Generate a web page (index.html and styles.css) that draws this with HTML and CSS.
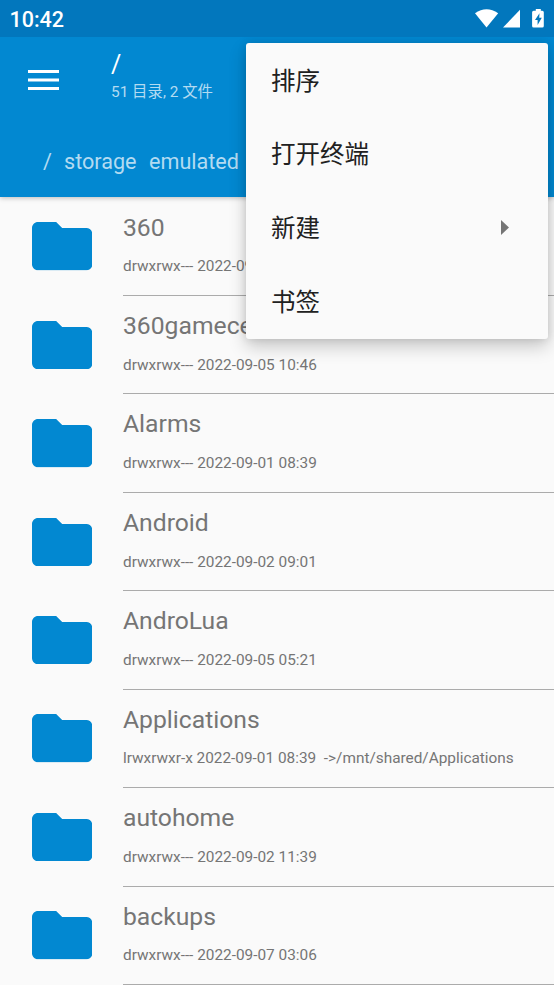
FILE: index.html
```html
<!DOCTYPE html>
<html lang="zh-CN">
<head>
<meta charset="utf-8">
<title>文件</title>
<link rel="stylesheet" href="styles.css">
</head>
<body>
<svg class="defs" aria-hidden="true"><symbol id="folder" viewBox="2 4 20 16"><path d="M10 4H4c-1.1 0-2 .9-2 2v12c0 1.1.9 2 2 2h16c1.1 0 2-.9 2-2V8c0-1.1-.9-2-2-2h-8z"/></symbol></svg>
<div class="status">
  <span class="clock">10:42</span>
  <svg class="status-icons" viewBox="0 0 70 20">
    <path d="M0 4.300Q11.500 -3.700 23.200 4.300L11.500 18.500z"/>
    <path d="M45 .7V18.500H28z"/>
    <path fill-rule="evenodd" d="M60.800 0h5v1.800h1.500q1.500 0 1.500 1.500v13.700q0 1.500-1.500 1.500h-8.700q-1.500 0-1.500-1.500V3.300q0-1.500 1.500-1.500h2.200zM64.500 4.300l-4.500 6.600h2.600v5l4.200-7.100h-2.600z"/>
  </svg>
</div>
<header class="appbar">
  <div class="toolbar">
    <svg class="burger" viewBox="0 0 31 20"><path d="M0 0h31v3H0zM0 8.500h31v3H0zM0 17h31v3H0z"/></svg>
    <div class="heading">
      <div class="title">/</div>
      <div class="subtitle">51 目录, 2 文件</div>
    </div>
  </div>
  <nav class="crumbs"><span class="root">/</span><span class="crumb">storage</span><span>emulated</span></nav>
</header>
<main class="list">
  <div class="row"><svg class="folder"><use href="#folder"/></svg><div class="info"><div class="name">360</div><div class="meta">drwxrwx--- 2022-09-05 10:46</div></div></div>
  <div class="row"><svg class="folder"><use href="#folder"/></svg><div class="info"><div class="name">360gamece</div><div class="meta">drwxrwx--- 2022-09-05 10:46</div></div></div>
  <div class="row"><svg class="folder"><use href="#folder"/></svg><div class="info"><div class="name">Alarms</div><div class="meta">drwxrwx--- 2022-09-01 08:39</div></div></div>
  <div class="row"><svg class="folder"><use href="#folder"/></svg><div class="info"><div class="name">Android</div><div class="meta">drwxrwx--- 2022-09-02 09:01</div></div></div>
  <div class="row"><svg class="folder"><use href="#folder"/></svg><div class="info"><div class="name">AndroLua</div><div class="meta">drwxrwx--- 2022-09-05 05:21</div></div></div>
  <div class="row"><svg class="folder"><use href="#folder"/></svg><div class="info"><div class="name">Applications</div><div class="meta">lrwxrwxr-x 2022-09-01 08:39  -&gt;/mnt/shared/Applications</div></div></div>
  <div class="row"><svg class="folder"><use href="#folder"/></svg><div class="info"><div class="name">autohome</div><div class="meta">drwxrwx--- 2022-09-02 11:39</div></div></div>
  <div class="row"><svg class="folder"><use href="#folder"/></svg><div class="info"><div class="name">backups</div><div class="meta">drwxrwx--- 2022-09-07 03:06</div></div></div>
</main>
<div class="menu">
  <div class="item"><span>排序</span></div>
  <div class="item"><span>打开终端</span></div>
  <div class="item"><span>新建</span><svg class="arrow" viewBox="0 0 8 15"><path d="M0 0l8 7.500L0 15z"/></svg></div>
  <div class="item"><span>书签</span></div>
</div>
</body>
</html>
```
FILE: styles.css
```css
* { box-sizing: border-box; }
body {
  margin: 0;
  height: 985px;
  overflow: hidden;
  background: #fafafa;
  font-family: Roboto, "Noto Sans CJK SC", sans-serif;
}
.defs { position: absolute; width: 0; height: 0; }
.status {
  position: relative;
  z-index: 1;
  height: 37px;
  padding: 0 9px 0 9.500px;
  background: #0277bd;
  color: #fff;
  display: flex;
  justify-content: space-between;
  align-items: center;
}
.clock { font-size: 21.5px; font-weight: 500; line-height: 37px; padding-top: 2px; }
.status-icons { width: 70px; height: 20px; fill: #fff; }
.appbar {
  position: relative;
  height: 160px;
  background: #0288d1;
  box-shadow: 0 1px 5px rgba(0, 0, 0, .25);
  color: #fff;
}
.toolbar { display: flex; height: 86px; padding-left: 28px; align-items: center; }
.burger { width: 31px; height: 20px; fill: #fff; }
.heading { margin-left: 52px; padding-bottom: 7px; }
.title { font-size: 25px; line-height: 30px; }
.subtitle { font-size: 15.400px; line-height: 24px; color: #b3dbf1; white-space: nowrap; }
.crumbs {
  display: flex;
  height: 74px;
  padding: 2px 0 0 43px;
  align-items: center;
  font-size: 21.600px;
  color: #b3dbf1;
}
.root { width: 21px; }
.crumb { width: 85px; }
.list { padding-top: .5px; }
.row { display: flex; height: 98.440px; padding-left: 31.600px; }
.folder { flex: none; width: 60.400px; height: 48.400px; margin-top: 24.800px; fill: #0288d1; }
.info { flex: 1; margin-left: 31px; border-bottom: 1px solid #ababab; color: #757575; white-space: pre; }
.name { font-size: 24.700px; line-height: 30px; margin-top: 15px; }
.meta { font-size: 15.370px; line-height: 20px; margin-top: 13.700px; }
.menu {
  position: absolute;
  left: 246px;
  top: 43px;
  width: 302px;
  height: 295.500px;
  border-radius: 3px;
  background: #fafafa;
  box-shadow: 0 8px 18px rgba(0, 0, 0, .2), 0 0 8px rgba(0, 0, 0, .12);
}
.item {
  display: flex;
  height: 73.800px;
  padding: 0 39px 0 25px;
  align-items: center;
  justify-content: space-between;
  font-size: 24.500px;
  font-family: "Noto Sans CJK SC", sans-serif;
  color: #212121;
}
.item span { margin-top: -1.500px; }
.arrow { width: 8px; height: 15px; fill: #757575; }
```
